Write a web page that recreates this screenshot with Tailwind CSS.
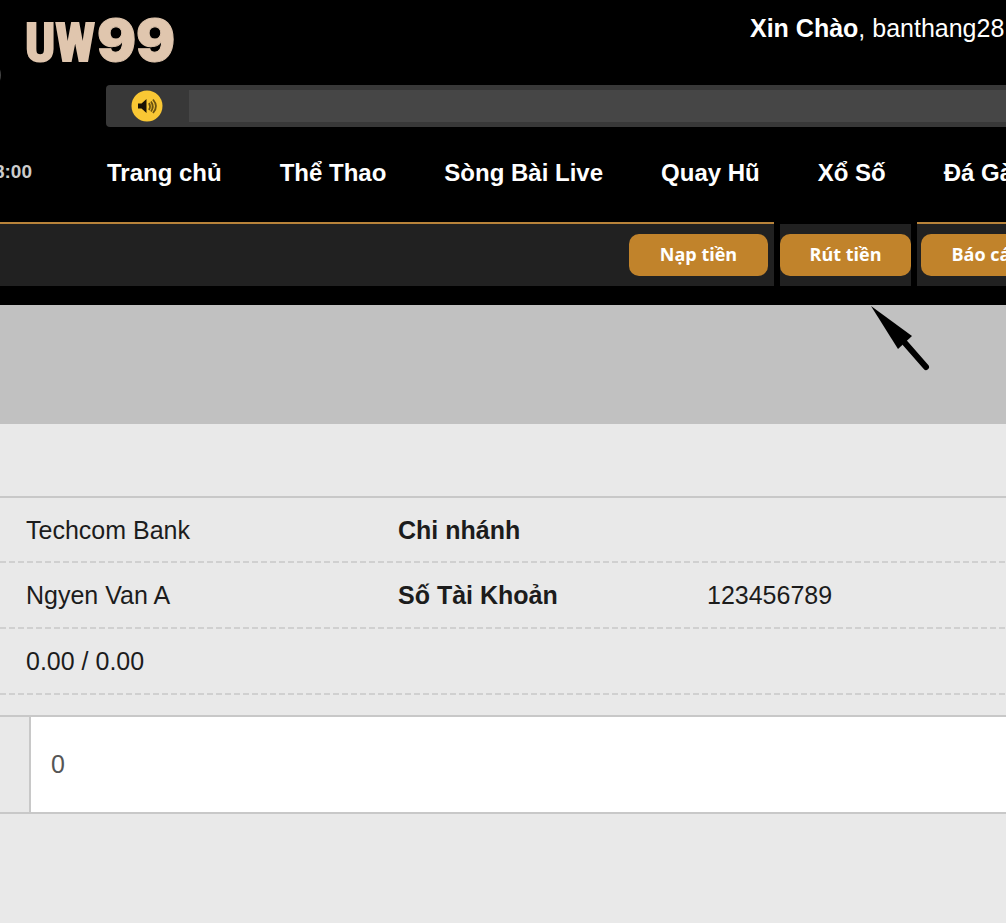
<!DOCTYPE html>
<html lang="vi">

<head>
    <meta charset="UTF-8">
    <meta name="viewport" content="width=device-width, initial-scale=1.0">
    <title>UW99 - Rút tiền</title>
    <script src="https://cdn.jsdelivr.net/npm/@tailwindcss/browser@4"></script>
</head>

<body class="bg-[#e9e9e9] min-h-screen overflow-x-hidden font-['Liberation_Sans',Arial,sans-serif] text-[25px] text-[#1c1c1c]">
    <!-- Header -->
    <header class="relative bg-black text-white overflow-hidden pb-[19px]">
        <div class="absolute -left-[29px] top-[60px] size-[30px] rounded-full bg-[#444]"></div>

        <div class="flex items-start justify-between h-[85px] pl-[25px]">
            <a href="#" class="flex items-baseline gap-0.5 text-[#e0c6ae] pt-1 leading-[72px]">
                <span class="font-['Liberation_Sans_Narrow','Roboto_Condensed','Open_Sans_Condensed',sans-serif] font-bold text-[53px] [-webkit-text-stroke:2px]">UW</span>
                <span class="font-['Inter',sans-serif] font-black text-[58px] [-webkit-text-stroke:1px]">99</span>
            </a>
            <div class="w-64 shrink-0 pt-3 leading-8 whitespace-nowrap"><b>Xin Chào</b>, banthang28</div>
        </div>

        <!-- Announcement bar -->
        <div class="flex items-center ml-[106px] h-[42px] bg-[#383838] rounded-l">
            <svg class="size-8 ml-[25px] mr-[26px] shrink-0" viewBox="0 0 32 32" fill="none">
                <circle cx="16" cy="16" r="15.5" fill="#f9c734" />
                <path d="M7 13.5h3.5l5-4.5v14l-5-4.5H7z" fill="#1a1205" />
                <path d="M18 13q2 3.500 0 7M20 11.500q3.500 5 0 10M22 9.500q6 7 0 13.500" stroke="#6b5210" stroke-width="1.800" />
            </svg>
            <div class="grow h-8 bg-[#464646]"></div>
        </div>

        <!-- Main menu -->
        <nav class="flex items-center h-[95px] pb-1 whitespace-nowrap">
            <div class="flex justify-end w-8 mr-[75px] shrink-0 text-[19px] font-bold text-[#ccc]">8:00</div>
            <div class="flex gap-[58px] text-[24px] font-bold leading-9">
                <a href="#">Trang chủ</a>
                <a href="#">Thể Thao</a>
                <a href="#">Sòng Bài Live</a>
                <a href="#">Quay Hũ</a>
                <a href="#">Xổ Số</a>
                <a href="#">Đá Gà</a>
            </div>
        </nav>

        <!-- Account buttons -->
        <div class="flex gap-1.5 h-16 font-['Open_Sans','Noto_Sans',sans-serif] text-[18px] font-bold whitespace-nowrap">
            <div class="flex justify-end items-center grow bg-[#212121] border-t-2 border-[#b8833a] pr-1.5">
                <button class="w-[139px] h-[42px] pb-0.5 rounded-[10px] bg-[#c1832b]">Nạp tiền</button>
            </div>
            <div class="flex items-center bg-[#212121] border-t-2 border-black">
                <button class="w-[131px] h-[42px] pb-0.5 rounded-[10px] bg-[#c1832b]">Rút tiền</button>
            </div>
            <div class="flex items-center w-[89px] shrink-0 bg-[#212121] border-t-2 border-[#b8833a] pl-1">
                <button class="w-[131px] h-[42px] pb-0.5 shrink-0 rounded-[10px] bg-[#c1832b]">Báo cáo</button>
            </div>
        </div>
    </header>

    <!-- Banner -->
    <div class="relative h-[119px] bg-[#c1c1c1]">
        <svg class="absolute left-[870px] top-0 w-[62px] h-[68px]" viewBox="0 0 62 68">
            <path d="M1 1L42 31L28 44Z" />
            <path d="M35 38L56 62" stroke="#000" stroke-width="6" stroke-linecap="round" />
        </svg>
    </div>

    <!-- Withdraw form -->
    <main class="pt-[72px]">
        <table class="w-full table-fixed border-t-2 border-[#c8c8c8] text-left">
            <tbody>
                <tr class="h-[66px] bg-[linear-gradient(to_right,#d0d0d0_6px,transparent_6px)] bg-[length:9px_2px] bg-bottom-left bg-repeat-x">
                    <td class="w-[398px] pl-[26px]">Techcom Bank</td>
                    <th class="w-[309px]">Chi nhánh</th>
                    <td></td>
                </tr>
                <tr class="h-[66px] bg-[linear-gradient(to_right,#d0d0d0_6px,transparent_6px)] bg-[length:9px_2px] bg-bottom-left bg-repeat-x">
                    <td class="pl-[26px]">Ngyen Van A</td>
                    <th>Số Tài Khoản</th>
                    <td>123456789</td>
                </tr>
                <tr class="h-[66px] bg-[linear-gradient(to_right,#d0d0d0_6px,transparent_6px)] bg-[length:9px_2px] bg-bottom-left bg-repeat-x">
                    <td class="pl-[26px]">0.00 / 0.00</td>
                    <th></th>
                    <td></td>
                </tr>
            </tbody>
        </table>
        <div class="flex mt-5 h-[99px] border-y-2 border-[#c8c8c8]">
            <label for="amount" class="w-[29px] shrink-0"></label>
            <input id="amount" type="text" value="0" aria-label="Số tiền"
                class="grow min-w-0 bg-white border-l-2 border-[#c8c8c8] pl-5 text-[#555] outline-none">
        </div>
    </main>
</body>

</html>
